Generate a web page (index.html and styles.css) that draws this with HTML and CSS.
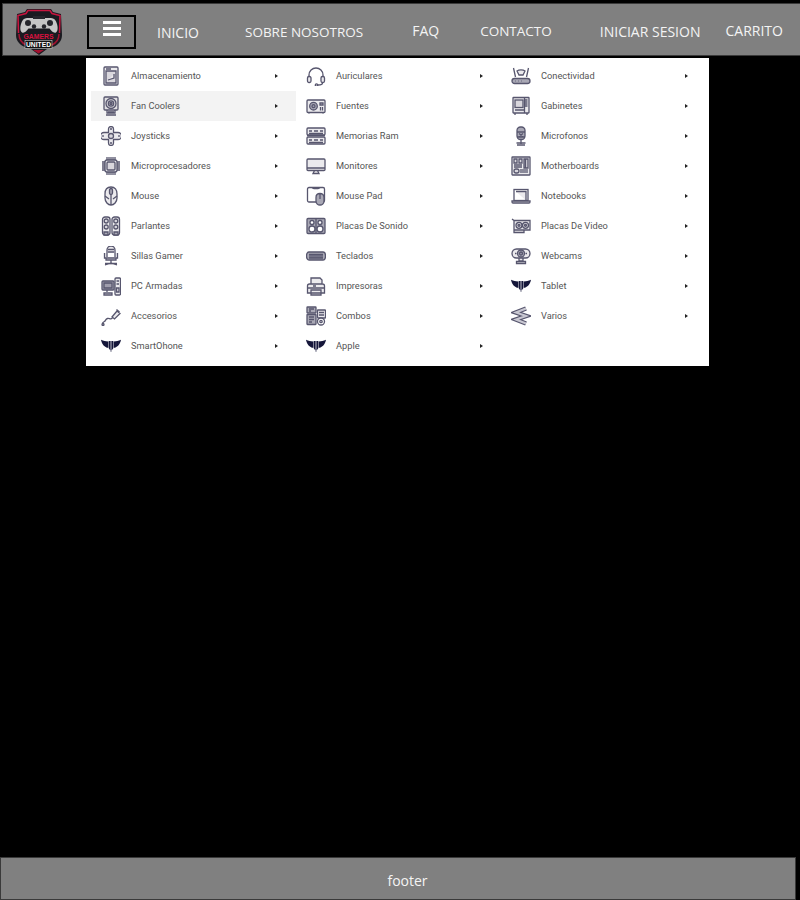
FILE: index.html
```html
<!DOCTYPE html>
<html lang="es">
<head>
<meta charset="utf-8">
<title>Gamers United</title>
<link rel="stylesheet" href="styles.css">
</head>
<body>
<svg class="defs" width="0" height="0" aria-hidden="true">
  <symbol id="i-storage" viewBox="0 0 20 20"><rect x="3" y="1" width="14" height="18" rx="1"/><path d="M5 3h5M5 5h10v12H5zM7 14l6-2V8"/></symbol>
  <symbol id="i-fan" viewBox="0 0 20 20"><rect x="3" y="1" width="14" height="13" rx="1"/><circle cx="10" cy="7.500" r="5"/><circle cx="10" cy="7.500" r="2.600"/><circle cx="10" cy="7.500" r="1"/><path d="M6 14v3h8v-3M5 19h10M7 16h6"/></symbol>
  <symbol id="i-joy" viewBox="0 0 20 20"><path d="M7.500 3a2.500 2.500 0 0 1 5 0V6.500H17a3.500 3.500 0 0 1 0 7h-4.500V17a2.500 2.500 0 0 1-5 0V13.500H3a3.500 3.500 0 0 1 0-7h4.500z"/><circle cx="10" cy="10" r="2.500"/><path d="M9 3h2M9 17h2M2 9v2M18 9v2"/></symbol>
  <symbol id="i-cpu" viewBox="0 0 20 20"><rect x="4" y="4" width="12" height="12" rx="2"/><rect x="6" y="6" width="8" height="8" rx="1"/><path d="M6 1v3M8 1v3M10 1v3M12 1v3M14 1v3M6 16v3M8 16v3M10 16v3M12 16v3M14 16v3M1 6h3M1 8h3M1 10h3M1 12h3M1 14h3M16 6h3M16 8h3M16 10h3M16 12h3M16 14h3"/></symbol>
  <symbol id="i-mouse" viewBox="0 0 20 20"><path d="M10 1C6 1 4 4 4 8v4c0 4 3 7 6 7s6-3 6-7V8c0-4-2-7-6-7z"/><rect x="8.500" y="2.500" width="3" height="6" rx="1.500" class="fd"/><path d="M10 9v10M4 10l4 3M16 10l-4 3"/></symbol>
  <symbol id="i-speakers" viewBox="0 0 20 20"><rect x="1.500" y="1" width="7.500" height="18" rx="2.500"/><rect x="11" y="1" width="7.500" height="18" rx="2.500"/><circle cx="5.200" cy="5" r="2"/><circle cx="14.800" cy="5" r="2"/><circle cx="5.200" cy="11" r="2"/><circle cx="14.800" cy="11" r="2"/><path d="M3 16h4v3H3zM13 16h4v3h-4z" class="fd"/></symbol>
  <symbol id="i-chair" viewBox="0 0 20 20"><path d="M6 11V4a4 4 0 0 1 8 0v7M7 3.500h6M7 6h6M3.500 7v5H16.500V7M5 12v2h10v-2M10 14v3M4 19l6-2 6 2M4 17.500h12"/></symbol>
  <symbol id="i-pc" viewBox="0 0 20 20"><rect x="1" y="5" width="12" height="9" rx="1" class="fd"/><path d="M3 7h8v5H3zM6 14v2M3 17h8v2H3z"/><rect x="14" y="2" width="5.500" height="17" rx="1"/><path d="M15.500 5h2.500M15.500 8h2.500M15.500 12h2.500v4h-2.500z"/></symbol>
  <symbol id="i-usb" viewBox="0 0 20 20"><path d="M11 11l5-6 3 2.500-5.500 5.500zM15.500 3.500l3 2.500"/><path class="none" d="M11.500 12c-2 2-3 0-5 .5s-2 2.500-3 3-2 .5-2 2.500"/><circle cx="2" cy="18.500" r="1"/></symbol>
  <symbol id="i-brand" viewBox="0 0 22 20"><path class="solid" d="M0 3c3 1.200 5 1.500 8 2v7C4 11.500 1 8 0 3zM22 3c-3 1.200-5 1.500-8 2v7c4-.5 7-4 8-9zM8.500 4.500H10.300V15L8.500 12.500zM10.700 4.500h.600V16.500h-.600zM11.700 4.500h1.800V12.500L11.700 15z"/></symbol>
  <symbol id="i-headset" viewBox="0 0 20 20"><path class="none" d="M3 11V9a7 7 0 0 1 14 0v2"/><rect x="1.500" y="10.500" width="3.500" height="6" rx="1.500"/><rect x="15" y="10.500" width="3.500" height="6" rx="1.500"/><path class="none" d="M16.500 16.500v.5c0 1.500-2 2-4.500 2"/><circle cx="10.500" cy="19" r="1.200"/></symbol>
  <symbol id="i-psu" viewBox="0 0 20 20"><rect x="1" y="4" width="18" height="12.500" rx="1"/><circle cx="7.500" cy="10.200" r="3.800" class="fd"/><circle cx="7.500" cy="10.200" r="1.500"/><path d="M14 7h3v2h-3zM14.500 11v3.500M16.500 11v3.500M3 16.500v1M17 16.500v1"/></symbol>
  <symbol id="i-ram" viewBox="0 0 20 20"><rect x="1" y="2" width="18" height="7" rx="1"/><rect x="1" y="11" width="18" height="7" rx="1"/><path d="M3 5h3M8 5h4M14 5h3M3 7.500h14M3 14h3M8 14h4M14 14h3M3 16.500h14M1 9.500h18"/></symbol>
  <symbol id="i-monitor" viewBox="0 0 20 20"><rect x="1" y="3" width="18" height="11.500" rx="1"/><path d="M1 12h18M8.500 14.500L7 17.500h6l-1.500-3"/></symbol>
  <symbol id="i-pad" viewBox="0 0 20 20"><path class="none" d="M11 16H3a1.500 1.500 0 0 1-1.500-1.500V3A1.500 1.500 0 0 1 3 1.500h14A1.500 1.500 0 0 1 18.500 3v11.500A1.500 1.500 0 0 1 17 16M6 1.500c0 1.500 8 1.500 8 0"/><path class="fd" d="M14 7.500c-2.500 0-4 1.500-4 4v3.500c0 2.500 2 4 4 4s4-1.500 4-4v-3.500c0-2.500-1.500-4-4-4zM14 8v5"/></symbol>
  <symbol id="i-sound" viewBox="0 0 20 20"><rect x="1" y="2.500" width="18" height="15" rx="1" class="fd"/><circle cx="6" cy="13" r="3" class="wh"/><circle cx="14" cy="13" r="3" class="wh"/><circle cx="6" cy="6.500" r="2" class="wh"/><circle cx="14" cy="6.500" r="2" class="wh"/><path d="M10 3v14"/></symbol>
  <symbol id="i-keys" viewBox="0 0 20 20"><path class="fd" d="M3 6h14a2.500 4 0 0 1 0 8H3a2.500 4 0 0 1 0-8z"/><path d="M3 8.500h14M4 8v4M6 8v4M8 8v4M10 8v4M12 8v4M14 8v4M16 8v4M3 12h14"/></symbol>
  <symbol id="i-printer" viewBox="0 0 20 20"><path d="M5 8V2h9l2 2v4M1.500 17V10c0-1 1-2 2-2h13c1 0 2 1 2 2v7zM1.500 12h17M5 14h10v5H5zM7 10h3"/></symbol>
  <symbol id="i-combo" viewBox="0 0 20 20"><rect x="1" y="1" width="9" height="6" rx=".5" class="fd"/><path d="M3 3h5M3 5h2"/><rect x="1" y="8.500" width="9" height="10" rx=".5" class="fd"/><path d="M3 11h5M3 13.500h5M3 16h3"/><rect x="11.500" y="4" width="8" height="8" rx=".5"/><path d="M13 6.500h5M13 9h5"/><circle cx="15" cy="15.500" r="3.500" class="wh"/><circle cx="15" cy="15.500" r="1.200"/></symbol>
  <symbol id="i-router" viewBox="0 0 20 20"><path class="none" d="M2.500 2l2 9M17.500 2l-2 9"/><path d="M6 5c2-1.500 6-1.500 8 0l-2 4H8z"/><rect x="1" y="12.500" width="18" height="5" rx="2.500" class="fd"/><path d="M4 15h.500M7 15h.500M10 15h.500"/></symbol>
  <symbol id="i-case" viewBox="0 0 20 20"><rect x="2" y="1.500" width="16" height="15.500" rx=".5"/><rect x="4" y="4" width="8" height="7.500"/><path d="M14 4h2.500M14 6h2.500M14 8h2.500M14 10h2.500M4 14h10M4 17v2M16 17v2M13.500 1.500v15.500"/></symbol>
  <symbol id="i-mic" viewBox="0 0 20 20"><rect x="6" y="1" width="8" height="12.500" rx="3.500" class="fd"/><path d="M6 6h8M6 11h8M8 7.500l4 3M12 7.500l-4 3M10 13.500V18M6 19h8M5.500 17h9"/></symbol>
  <symbol id="i-board" viewBox="0 0 20 20"><rect x="1" y="1" width="18" height="18" rx=".5"/><path d="M3 3h3v4H3zM8 3h3v4H8zM13 3h4v9h-4zM14.500 3v9M3 9h8M3 11h8"/><rect x="3" y="13" width="5" height="4" rx="2"/><path d="M10 13v4M12 13v4M14 13v4M16 13v4"/></symbol>
  <symbol id="i-laptop" viewBox="0 0 20 20"><rect x="3" y="3.500" width="14" height="11" class="wh"/><path d="M5 5.500h10v9M1 15h18v1c0 .5-.5 1-1 1H2c-.5 0-1-.5-1-1z"/></symbol>
  <symbol id="i-gpu" viewBox="0 0 20 20"><path d="M1 3l2 1.500h16V14H3V4.500M3 14v2.500h10V14"/><circle cx="8" cy="9.300" r="3"/><circle cx="14.500" cy="9.300" r="3"/><circle cx="8" cy="9.300" r="1" class="fd"/><circle cx="14.500" cy="9.300" r="1" class="fd"/></symbol>
  <symbol id="i-cam" viewBox="0 0 20 20"><rect x="1" y="3" width="18" height="9" rx="4.500"/><circle cx="10" cy="7.500" r="3.500" class="fd"/><circle cx="10" cy="7.500" r="1.500"/><path d="M4 7.500h1.500M14.500 7.500H16M8 12v3h4v-3M5.500 17.500h9v-2h-9z"/></symbol>
  <symbol id="i-misc" viewBox="0 0 20 20"><path class="zz" d="M15 2.500L5 6.500 15 10 5 13.500 15 17.500"/><path class="zz-in" d="M15 2.500L5 6.500 15 10 5 13.500 15 17.500"/></symbol>
</svg>

<header class="topbar">
  <a class="logo" href="#" aria-label="Gamers United">
    <svg viewBox="0 0 46 46" width="46" height="46">
      <path class="l-shield" d="M1 5l8-2 2-3h24l2 3 8 2 1 21c0 6-4 10-9 12l-6 2-8 6-8-6-6-2C4 36 0 32 0 26z"/>
      <path class="l-line" d="M2.500 24L2 6.500l8-2 2-3h22l2 3 8 2L43.500 24"/>
      <path class="l-side" d="M3 25c0 6 3 9 7 11M43 25c0 6-3 9-7 11"/>
      <path class="l-pad" d="M11 9h24c3 0 5 2 6 6 1 3 1 7-1 8.500-2.500 1-4.500-1.500-6.500-4H12.500c-2 2.500-4 5-6.500 4-2-1.500-2-5.500-1-8.500 1-4 3-6 6-6z"/>
      <circle class="l-dark" cx="12" cy="14" r="3"/><circle class="l-dark" cx="34" cy="14" r="3"/>
      <circle class="l-dark" cx="18" cy="17.500" r="2.200"/><circle class="l-dark" cx="28" cy="17.500" r="2.200"/>
      <rect class="l-dark" x="17" y="7" width="12" height="3"/>
      <text class="l-gamers" x="22.500" y="30" text-anchor="middle" textLength="30" lengthAdjust="spacingAndGlyphs">GAMERS</text>
      <rect class="l-box" x="9" y="31.500" width="27" height="8"/>
      <text class="l-united" x="22.500" y="38.300" text-anchor="middle" textLength="25" lengthAdjust="spacingAndGlyphs">UNITED</text>
      <path class="l-redfill" d="M17 41h11l-5.500 3.500z"/>
    </svg>
  </a>
  <button class="burger" aria-label="Menu"><span></span><span></span><span></span></button>
  <a class="nav n-inicio" href="#">INICIO</a>
  <a class="nav n-sobre" href="#">SOBRE NOSOTROS</a>
  <a class="nav n-faq" href="#">FAQ</a>
  <a class="nav n-contacto" href="#">CONTACTO</a>
  <a class="nav n-login" href="#">INICIAR SESION</a>
  <a class="nav n-cart" href="#">CARRITO</a>
</header>

<nav class="megamenu">
  <a class="item"><svg class="ic"><use href="#i-storage"/></svg><span class="lbl">Almacenamiento</span><i class="arr"></i></a>
  <a class="item"><svg class="ic"><use href="#i-headset"/></svg><span class="lbl">Auriculares</span><i class="arr"></i></a>
  <a class="item"><svg class="ic"><use href="#i-router"/></svg><span class="lbl">Conectividad</span><i class="arr"></i></a>

  <a class="item active"><svg class="ic"><use href="#i-fan"/></svg><span class="lbl">Fan Coolers</span><i class="arr"></i></a>
  <a class="item"><svg class="ic"><use href="#i-psu"/></svg><span class="lbl">Fuentes</span><i class="arr"></i></a>
  <a class="item"><svg class="ic"><use href="#i-case"/></svg><span class="lbl">Gabinetes</span><i class="arr"></i></a>

  <a class="item"><svg class="ic"><use href="#i-joy"/></svg><span class="lbl">Joysticks</span><i class="arr"></i></a>
  <a class="item"><svg class="ic"><use href="#i-ram"/></svg><span class="lbl">Memorias Ram</span><i class="arr"></i></a>
  <a class="item"><svg class="ic"><use href="#i-mic"/></svg><span class="lbl">Microfonos</span><i class="arr"></i></a>

  <a class="item"><svg class="ic"><use href="#i-cpu"/></svg><span class="lbl">Microprocesadores</span><i class="arr"></i></a>
  <a class="item"><svg class="ic"><use href="#i-monitor"/></svg><span class="lbl">Monitores</span><i class="arr"></i></a>
  <a class="item"><svg class="ic"><use href="#i-board"/></svg><span class="lbl">Motherboards</span><i class="arr"></i></a>

  <a class="item"><svg class="ic"><use href="#i-mouse"/></svg><span class="lbl">Mouse</span><i class="arr"></i></a>
  <a class="item"><svg class="ic"><use href="#i-pad"/></svg><span class="lbl">Mouse Pad</span><i class="arr"></i></a>
  <a class="item"><svg class="ic"><use href="#i-laptop"/></svg><span class="lbl">Notebooks</span><i class="arr"></i></a>

  <a class="item"><svg class="ic"><use href="#i-speakers"/></svg><span class="lbl">Parlantes</span><i class="arr"></i></a>
  <a class="item"><svg class="ic"><use href="#i-sound"/></svg><span class="lbl">Placas De Sonido</span><i class="arr"></i></a>
  <a class="item"><svg class="ic"><use href="#i-gpu"/></svg><span class="lbl">Placas De Video</span><i class="arr"></i></a>

  <a class="item"><svg class="ic"><use href="#i-chair"/></svg><span class="lbl">Sillas Gamer</span><i class="arr"></i></a>
  <a class="item"><svg class="ic"><use href="#i-keys"/></svg><span class="lbl">Teclados</span><i class="arr"></i></a>
  <a class="item"><svg class="ic"><use href="#i-cam"/></svg><span class="lbl">Webcams</span><i class="arr"></i></a>

  <a class="item"><svg class="ic"><use href="#i-pc"/></svg><span class="lbl">PC Armadas</span><i class="arr"></i></a>
  <a class="item"><svg class="ic"><use href="#i-printer"/></svg><span class="lbl">Impresoras</span><i class="arr"></i></a>
  <a class="item"><svg class="ic"><use href="#i-brand"/></svg><span class="lbl">Tablet</span><i class="arr"></i></a>

  <a class="item"><svg class="ic"><use href="#i-usb"/></svg><span class="lbl">Accesorios</span><i class="arr"></i></a>
  <a class="item"><svg class="ic"><use href="#i-combo"/></svg><span class="lbl">Combos</span><i class="arr"></i></a>
  <a class="item"><svg class="ic"><use href="#i-misc"/></svg><span class="lbl">Varios</span><i class="arr"></i></a>

  <a class="item"><svg class="ic"><use href="#i-brand"/></svg><span class="lbl">SmartOhone</span><i class="arr"></i></a>
  <a class="item"><svg class="ic"><use href="#i-brand"/></svg><span class="lbl">Apple</span><i class="arr"></i></a>
</nav>

<main class="content"></main>

<footer class="pagefoot">footer</footer>
</body>
</html>
```
FILE: styles.css
```css
* { box-sizing: border-box; }
html, body { height: 100%; }
body {
  margin: 0;
  background: #000;
  display: flex;
  flex-direction: column;
  height: 900px;
  overflow: hidden;
  font-family: "Open Sans", "Liberation Sans", sans-serif;
  color: #f4f4f4;
}
a { color: inherit; text-decoration: none; }
.defs { display: block; height: 0; }

.topbar {
  margin: 3px 0 0 2px;
  height: 53px;
  background: #808080;
  border: 1px solid #3a3a3a;
  border-right: 0;
  display: flex;
  align-items: flex-start;
  position: relative;
  flex: none;
}
.logo { display: block; margin: 5px 0 0 13px; height: 46px; width: 46px; flex: none; }
.l-shield { fill: #1a1a20; }
.l-line { fill: none; stroke: #c9153f; stroke-width: 1.500; }
.l-side { fill: none; stroke: #a3112f; stroke-width: 1.500; }
.l-pad { fill: #c6c6c6; }
.l-dark { fill: #26262c; }
.l-box { fill: #111; stroke: #eee; stroke-width: .5; }
.l-redfill { fill: #a3112f; }
.l-gamers { font: 700 8px "Liberation Sans", sans-serif; fill: #d8123f; }
.l-united { font: 700 7.500px "Liberation Sans", sans-serif; fill: #fff; }

.burger {
  margin: 11px 0 0 25px;
  width: 49px;
  height: 34px;
  background: transparent;
  border: 2px solid #000;
  padding: 4px 0 0 14px;
  display: flex;
  flex-direction: column;
  gap: 3px;
  flex: none;
}
.burger span { display: block; width: 18px; height: 3px; background: #fff; }

.nav { font-size: 14px; line-height: 20px; white-space: nowrap; flex: none; }
.n-inicio { margin: 19px 0 0 21px; }
.n-sobre { margin: 18px 0 0 46px; font-size: 13.500px; }
.n-faq { margin: 17px 0 0 49px; }
.n-contacto { margin: 17px 0 0 41px; font-size: 13.500px; }
.n-login { margin: 18px 0 0 48px; }
.n-cart { margin: 17px 0 0 25px; }

.megamenu {
  position: absolute;
  left: 86px;
  top: 58px;
  width: 623px;
  height: 308px;
  background: #fff;
  padding: 3px 3px 0 5px;
  display: grid;
  grid-template-columns: repeat(3, 205px);
  grid-auto-rows: 30px;
  align-content: start;
}
.item {
  display: flex;
  align-items: center;
  padding-left: 10px;
  position: relative;
  color: #555;
  font: 9.250px/30px Roboto, "Liberation Sans", sans-serif;
}
.item.active { background: #f3f3f3; }
.ic {
  width: 20px;
  height: 20px;
  flex: none;
  fill: rgba(87, 86, 110, .12);
  stroke: #57566e;
  stroke-width: 1.300;
  filter: blur(.25px);
}
.fd { fill: #a9a8b5; }
.wh { fill: #fff; }
.none { fill: none; }
.zz { fill: none; stroke: #57566e; stroke-width: 4.500; }
.zz-in { fill: none; stroke: #c9c8d2; stroke-width: 2.200; }
.solid { fill: #15163a; stroke: none; }
.lbl { margin-left: 10px; flex: 1; }
.arr {
  width: 0;
  height: 0;
  margin-right: 18px;
  border-left: 3px solid #222;
  border-top: 2px solid transparent;
  border-bottom: 2px solid transparent;
}

.content { flex: 1; }

.pagefoot {
  flex: none;
  width: 796px;
  height: 43px;
  background: #808080;
  border: 1px solid #3a3a3a;
  text-align: center;
  font-size: 14px;
  line-height: 45px;
  padding-left: 19px;
}
```
